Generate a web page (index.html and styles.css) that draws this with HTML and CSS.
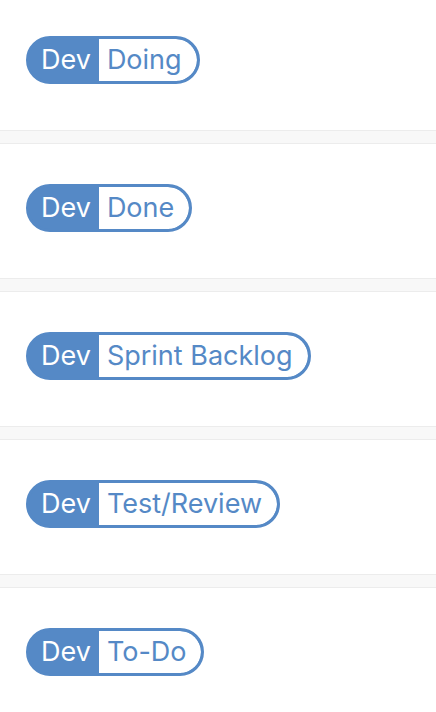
FILE: index.html
```html
<!DOCTYPE html>
<html lang="en">
<head>
<meta charset="utf-8">
<title>Dev statuses</title>
<link rel="stylesheet" href="styles.css">
</head>
<body>
<div class="list">
  <div class="row first"><span class="badge"><span class="scope">Dev</span><span class="name">Doing</span></span></div>
  <div class="sep"></div>
  <div class="row"><span class="badge"><span class="scope">Dev</span><span class="name">Done</span></span></div>
  <div class="sep"></div>
  <div class="row"><span class="badge"><span class="scope">Dev</span><span class="name">Sprint Backlog</span></span></div>
  <div class="sep"></div>
  <div class="row"><span class="badge"><span class="scope">Dev</span><span class="name">Test/Review</span></span></div>
  <div class="sep"></div>
  <div class="row"><span class="badge"><span class="scope">Dev</span><span class="name">To-Do</span></span></div>
</div>
</body>
</html>
```

FILE: styles.css
```css
html, body {
  margin: 0;
  padding: 0;
  background: #ffffff;
}
body {
  font-family: Inter, "Noto Sans", "Liberation Sans", sans-serif;
  overflow: hidden;
}
.list {
  display: flex;
  flex-direction: column;
}
.row {
  padding: 40px 26px 46px;
  background: #ffffff;
}
.row.first {
  padding-top: 36px;
}
.sep {
  height: 12px;
  background: #f8f8f8;
  border-top: 1px solid #ececec;
  border-bottom: 1px solid #ececec;
}
.badge {
  display: inline-flex;
  align-items: stretch;
  height: 48px;
  box-sizing: border-box;
  border: 3px solid #5589c6;
  border-radius: 24px;
  background: #5589c6;
  overflow: hidden;
  font-size: 27px;
  line-height: 42px;
}
.scope {
  color: #ffffff;
  padding: 0 8px 0 12px;
}
.name {
  background: #ffffff;
  color: #5589c6;
  padding: 0 15px 0 8px;
  border-radius: 0 21px 21px 0;
}
```
